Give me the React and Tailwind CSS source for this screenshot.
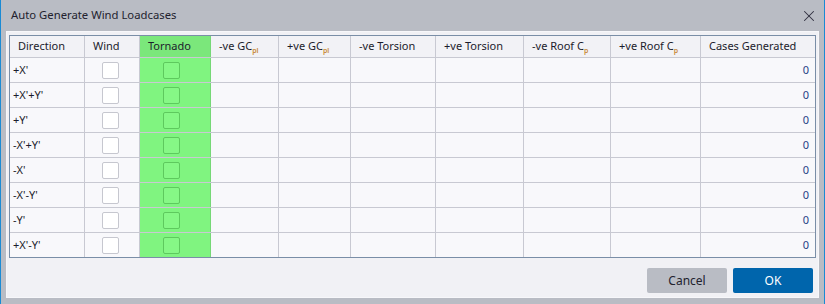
import { X } from 'lucide-react';

const cols = [
  { w: 'w-[75px]', label: 'Direction' },
  { w: 'w-[55px]', label: 'Wind' },
  { w: 'w-[71px]', label: 'Tornado' },
  { w: 'w-[68px]', label: '-ve GC', sub: 'pl' },
  { w: 'w-[72px]', label: '+ve GC', sub: 'pl' },
  { w: 'w-[85px]', label: '-ve Torsion' },
  { w: 'w-[88px]', label: '+ve Torsion' },
  { w: 'w-[87px]', label: '-ve Roof C', sub: 'p' },
  { w: 'w-[90px]', label: '+ve Roof C', sub: 'p' },
  { w: 'w-[114px]', label: 'Cases Generated' },
];

const directions = ["+X'", "+X'+Y'", "+Y'", "-X'+Y'", "-X'", "-X'-Y'", "-Y'", "+X'-Y'"];

function Checkbox({ green }) {
  return (
    <div
      className={
        green
          ? 'w-[17px] h-[17px] rounded-[2px] border border-[#5ec95e] bg-[#86f886]'
          : 'w-[17px] h-[17px] rounded-[2px] border border-[#c6c7cf] bg-white'
      }
    />
  );
}

export default function App() {
  return (
    <div
      className="w-[825px] h-[304px] flex flex-col bg-[#b9bcc4] border-x border-[#1a8ad4] text-[11px] text-[#1c1c2c]"
      style={{ fontFamily: '"Noto Sans", "Open Sans", sans-serif' }}
    >
      <div className="h-[31px] flex items-center justify-between pl-[10px] pr-[6px] shrink-0">
        <span className="text-[11.3px] text-[#22222e]">Auto Generate Wind Loadcases</span>
        <X className="w-[18px] h-[18px] text-[#303040]" strokeWidth={1.4} />
      </div>

      <div className="mx-[5px] h-[267px] bg-[#f1f1f5] border border-[#f7f7fa] flex flex-col pt-[3px] pl-[2px] pr-[3px]">
        <div className="border border-[#7a8ea7] w-[807px]">
          {/* header */}
          <div className="flex h-[22px] bg-[#f2f2f6] border-b border-[#c8c9d2]">
            {cols.map((c, i) => (
              <div
                key={i}
                className={`${c.w} h-full flex items-center pl-[8px] ${i < cols.length - 1 ? 'border-r border-[#c8c9d2]' : ''} ${i === 2 ? 'bg-[#7be77b] border-r-[#76d876]' : ''}`}
              >
                <span className="whitespace-nowrap">
                  {c.label}
                  {c.sub && <span className="relative top-[3px] text-[7px] text-[#c98a3a] font-semibold">{c.sub}</span>}
                </span>
              </div>
            ))}
          </div>
          {/* rows */}
          {directions.map((d, r) => (
            <div
              key={r}
              className={`flex bg-[#f8f8fb] ${r < directions.length - 1 ? 'h-[25px] border-b border-[#c8c9d2]' : 'h-[24px]'}`}
            >
              {cols.map((c, i) => (
                <div
                  key={i}
                  className={`${c.w} h-full flex items-center ${i < cols.length - 1 ? 'border-r border-[#c8c9d2]' : ''} ${i === 2 ? 'bg-[#80f480] border-r-[#76d876]' : ''} ${i === 0 ? 'pl-[3px]' : ''} ${i === 1 ? 'pl-[17px]' : ''} ${i === 2 ? 'pl-[23px]' : ''} ${i === 9 ? 'justify-end pr-[6px] text-[#1f3f86]' : ''}`}
                >
                  {i === 0 && <span className="whitespace-nowrap">{d}</span>}
                  {i === 1 && <Checkbox />}
                  {i === 2 && <Checkbox green />}
                  {i === 9 && <span>0</span>}
                </div>
              ))}
            </div>
          ))}
        </div>

        <div className="flex justify-end gap-[6px] mt-[10px] pr-[2px]">
          <button className="w-[80px] h-[25px] rounded-[2px] bg-[#b9bcc4] text-[#22222e] text-[12px]">Cancel</button>
          <button className="w-[80px] h-[25px] rounded-[2px] bg-[#0065ac] text-white text-[12px]">OK</button>
        </div>
      </div>
    </div>
  );
}
